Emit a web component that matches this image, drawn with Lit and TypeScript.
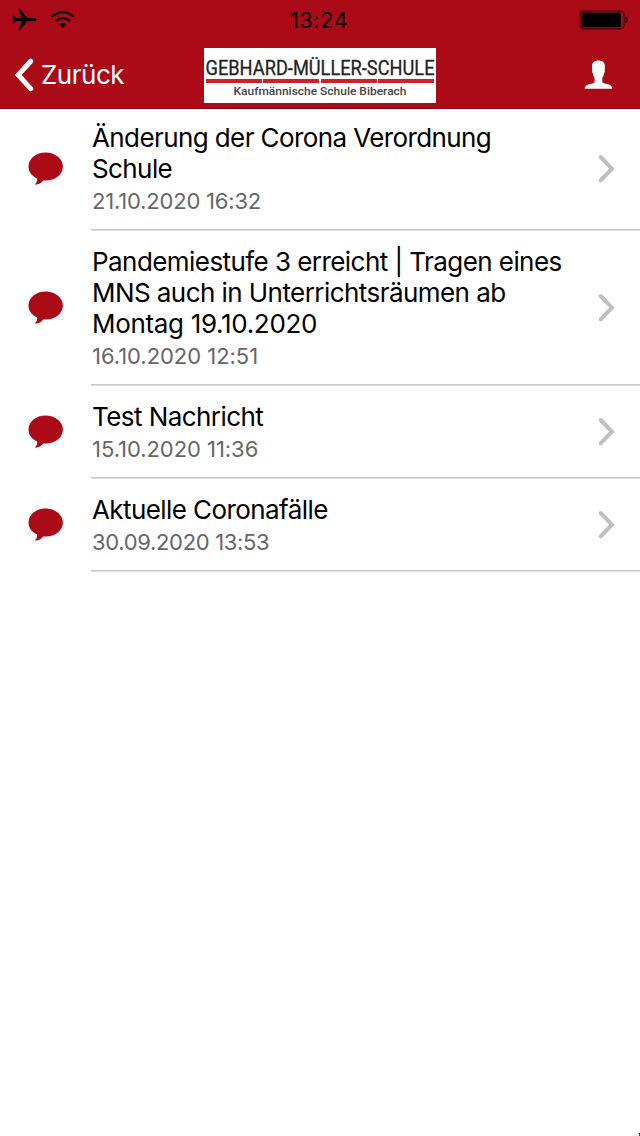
import { LitElement, html, css } from "lit";
import { customElement, property } from "lit/decorators.js";

interface Line {
  text: string;
  tracking: number;
}

interface Message {
  lines: Line[];
  date: Line;
}

const line = (text: string, tracking: number): Line => ({ text, tracking });

const messages: Message[] = [
  {
    lines: [line("Änderung der Corona Verordnung", -0.6), line("Schule", -0.6)],
    date: line("21.10.2020 16:32", -0.19),
  },
  {
    lines: [
      line("Pandemiestufe 3 erreicht | Tragen eines", -0.56),
      line("MNS auch in Unterrichtsräumen ab", -0.56),
      line("Montag 19.10.2020", -0.32),
    ],
    date: line("16.10.2020 12:51", -0.04),
  },
  { lines: [line("Test Nachricht", -0.56)], date: line("15.10.2020 11:36", -0.05) },
  { lines: [line("Aktuelle Coronafälle", -0.58)], date: line("30.09.2020 13:53", -0.33) },
];

@customElement("message-row")
export class MessageRow extends LitElement {
  @property({ attribute: false }) message!: Message;

  static styles = css`
    :host { display: grid; grid-template-columns: 91px 1fr; }
    .icon { display: flex; align-items: center; padding: 0 0 1px 28px; }
    .icon svg { display: block; }
    .content { display: flex; flex-direction: column; }
    .body { display: flex; align-items: center; justify-content: space-between; padding: 15px 25px 14px 1px; }
    .rule { height: 2px; background: linear-gradient(#c8c7cc 50%, #dedee1 50%); }
    .title { font-size: 26px; line-height: 31px; color: #000; white-space: nowrap; }
    .date { font-size: 22px; line-height: 27px; padding-top: 4px; color: #666; white-space: nowrap; }
    .chevron { display: block; flex: none; }
  `;

  render() {
    const { lines, date } = this.message;
    return html`
      <div class="icon">
        <svg width="36" height="34" viewBox="0 0 36 34">
          <path fill="#ab0a17" d="M17.500 .5C8 .5 .5 6.700 .5 14.600c0 5.200 3.200 9.500 8.600 12 .4 2.200-.4 4.300-2.300 5.800 3.200.5 6.200-1.300 8.400-4 1 .2 1.600.2 2.500.2 9.500 0 17.200-6.100 17.200-14S27 .5 17.500.5Z"/>
        </svg>
      </div>
      <div class="content">
        <div class="body">
          <div>
            ${lines.map((l) => html`<div class="title" style="letter-spacing:${l.tracking}px">${l.text}</div>`)}
            <div class="date" style="letter-spacing:${date.tracking}px">${date.text}</div>
          </div>
          <svg class="chevron" width="18" height="30" viewBox="0 0 18 30">
            <path d="M3.700 3 14.900 14.700 3.700 26.400" fill="none" stroke="#bfbfbf" stroke-width="4" stroke-linecap="round"/>
          </svg>
        </div>
        <div class="rule"></div>
      </div>
    `;
  }
}

@customElement("app-root")
export class AppRoot extends LitElement {
  static styles = css`
    :host {
      display: block; position: relative; width: 640px; height: 1136px; overflow: hidden;
      background: #fff; font-family: Inter, "Liberation Sans", sans-serif;
    }
    .header { box-sizing: border-box; height: 109px; background: #ab0a17; border-bottom: 1px solid #850914; }
    main { margin-top: -2px; }
    .status { display: grid; grid-template-columns: 1fr auto 1fr; align-items: center; height: 40px; }
    .left { display: flex; align-items: center; gap: 14px; padding-left: 12px; }
    .clock { font-size: 22px; line-height: 40px; letter-spacing: 0.4px; color: #000; margin-right: 2px; }
    .battery { justify-self: end; margin-right: 11px; }
    .nav { display: grid; grid-template-columns: 204px 232px 1fr; align-items: start; height: 67px; }
    .back { display: flex; align-items: center; gap: 7px; height: 70px; padding-left: 14px; color: #fff; font-size: 26px; letter-spacing: -0.5px; }
    .label { padding-bottom: 1px; }
    .logo {
      display: flex; flex-direction: column; align-items: center; box-sizing: border-box;
      height: 54.500px; margin-top: 8px; padding-top: 4px; background: #fff;
    }
    svg { display: block; }
    .name, .sub { overflow: visible; font-family: Roboto, "Liberation Sans", sans-serif; }
    .bars { display: grid; grid-template-columns: repeat(4, 1fr); gap: 1.500px; width: 228px; height: 4px; }
    .bar { background: #cf2027; }
    .profile { justify-self: end; margin: 20px 27px 0 0; }
    .speck { position: absolute; right: 0; bottom: 0; width: 1px; height: 3px; background: linear-gradient(#10148c 33%, #147a20 33% 66%, #c01818 66%); }
  `;

  render() {
    return html`
      <header class="header">
        <div class="status">
          <div class="left">
            <svg width="25" height="24" viewBox="0 0 25 24">
              <path d="M24.600 11.500c0 .9-1 1.500-2.500 1.500L15 13.300 7.900 22.600H6.400L9.700 13.300 4 12.900 1.800 15.300H.8V7.700H1.800L4 10.100 9.700 9.700 6.400.4H7.900L15 9.700 22.100 10c1.500 0 2.500.6 2.500 1.500Z"/>
            </svg>
            <svg width="24" height="18" viewBox="0 0 24 18">
              <g fill="none" stroke="#000" stroke-width="2.100">
                <path d="M.8 5.700Q11.800-3.300 22.800 5.700"/>
                <path d="M4.800 9.900Q11.800 4.300 18.800 9.900"/>
              </g>
              <path d="M8.300 13.300q3.500-2.600 7 0L11.800 17Z"/>
            </svg>
          </div>
          <div class="clock">13:24</div>
          <svg class="battery" width="50" height="20" viewBox="0 0 50 20">
            <rect x="1" y=".8" width="44" height="18" rx="3.500" fill="none" stroke="#4d050b" stroke-width="1.200"/>
            <rect x="2.500" y="2.400" width="39.500" height="14.800" rx="1.500"/>
            <path d="M46.500 6.500q2.500 1 2.500 3.300t-2.500 3.300Z"/>
          </svg>
        </div>
        <div class="nav">
          <div class="back">
            <svg width="20" height="34" viewBox="0 0 20 34">
              <path d="M16.700 3.200 4.200 17 16.700 30.600" fill="none" stroke="#fff" stroke-width="5" stroke-linecap="round"/>
            </svg>
            <span class="label">Zurück</span>
          </div>
          <div class="logo">
            <svg class="name" width="232" height="27" viewBox="0 0 232 27">
              <text x="1.500" y="23" font-size="21" fill="#222" stroke="#222" stroke-width=".3" textLength="229" lengthAdjust="spacingAndGlyphs">GEBHARD-MÜLLER-SCHULE</text>
            </svg>
            <div class="bars">
              <div class="bar"></div><div class="bar"></div><div class="bar"></div><div class="bar"></div>
            </div>
            <svg class="sub" width="176" height="17" viewBox="0 0 176 17">
              <text x="1.500" y="12" font-size="11.800" font-weight="500" fill="#444" textLength="173" lengthAdjust="spacingAndGlyphs">Kaufmännische Schule Biberach</text>
            </svg>
          </div>
          <svg class="profile" width="29" height="30" viewBox="0 0 29 30">
            <path fill="#fff" d="M14.500.6c4.200 0 6.400 2.100 6.400 5.800 0 1.300-.1 2.700-.3 4 .5.600.4 1.900-.4 2.700-.4 2.300-1 3.600-1.900 4.900v3.600c0 1.400 1.500 1.900 4.400 2.400 3.800.7 5.300 2 5.500 4.800H.6c.3-2.800 1.800-4.100 5.600-4.800 2.900-.5 4.400-1 4.400-2.400V18c-.9-1.300-1.500-2.600-1.900-4.900-.8-.8-.9-2.100-.4-2.700-.2-1.300-.3-2.700-.3-4C8 2.700 10.300.6 14.500.6Z"/>
          </svg>
        </div>
      </header>
      <main>${messages.map((m) => html`<message-row .message=${m}></message-row>`)}</main>
      <div class="speck"></div>
    `;
  }
}
